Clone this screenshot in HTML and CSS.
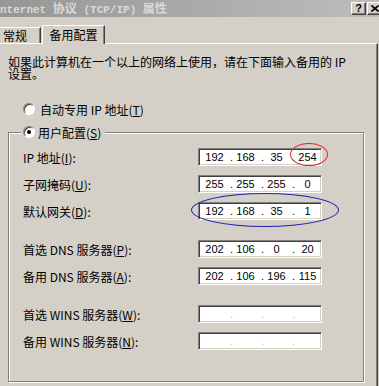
FILE: index.html
```html
<!DOCTYPE html>
<html lang="zh-CN">
<head>
<meta charset="utf-8">
<title>Internet 协议 (TCP/IP) 属性</title>
<link rel="stylesheet" href="styles.css">
</head>
<body>
<div class="titlebar">
  <span class="title">nternet <span class="cj">协议</span> (TCP/IP) <span class="cj">属性</span></span>
  <div class="tbtns">
    <span class="tbtn">?</span>
    <span class="tbtn"><svg width="8" height="7" viewBox="0 0 8 7"><path d="M0.5 0.5 L7.5 6.5 M7.5 0.5 L0.5 6.5" stroke="#000" stroke-width="1.6"/></svg></span>
  </div>
</div>
<div class="tabs">
  <div class="tab">常规</div>
  <div class="tab active">备用配置</div>
</div>
<div class="panel">
  <p class="desc"><span class="line">如果此计算机在一个以上的网络上使用，请在下面输入备用的 IP</span><span class="line">设置。</span></p>
  <div class="radio-row"><span class="radio"></span><span>自动专用 IP 地址(<u>T</u>)</span></div>
  <fieldset class="group">
    <legend><span class="radio checked"></span><span>用户配置(<u>S</u>)</span></legend>
    <div class="row"><span class="lbl">IP 地址(<u>I</u>):</span><div class="ip"><span class="oc">192</span><span class="dot">.</span><span class="oc">168</span><span class="dot">.</span><span class="oc">35</span><span class="dot">.</span><span class="oc">254</span></div></div>
    <div class="row"><span class="lbl">子网掩码(<u>U</u>):</span><div class="ip"><span class="oc">255</span><span class="dot">.</span><span class="oc">255</span><span class="dot">.</span><span class="oc">255</span><span class="dot">.</span><span class="oc">0</span></div></div>
    <div class="row"><span class="lbl">默认网关(<u>D</u>):</span><div class="ip"><span class="oc">192</span><span class="dot">.</span><span class="oc">168</span><span class="dot">.</span><span class="oc">35</span><span class="dot">.</span><span class="oc">1</span></div></div>
    <div class="row sep"><span class="lbl">首选 DNS 服务器(<u>P</u>):</span><div class="ip"><span class="oc">202</span><span class="dot">.</span><span class="oc">106</span><span class="dot">.</span><span class="oc">0</span><span class="dot">.</span><span class="oc">20</span></div></div>
    <div class="row"><span class="lbl">备用 DNS 服务器(<u>A</u>):</span><div class="ip"><span class="oc">202</span><span class="dot">.</span><span class="oc">106</span><span class="dot">.</span><span class="oc">196</span><span class="dot">.</span><span class="oc">115</span></div></div>
    <div class="row sep"><span class="lbl">首选 WINS 服务器(<u>W</u>):</span><div class="ip empty"><span class="oc"></span><span class="dot">.</span><span class="oc"></span><span class="dot">.</span><span class="oc"></span><span class="dot">.</span><span class="oc"></span></div></div>
    <div class="row"><span class="lbl">备用 WINS 服务器(<u>N</u>):</span><div class="ip empty"><span class="oc"></span><span class="dot">.</span><span class="oc"></span><span class="dot">.</span><span class="oc"></span><span class="dot">.</span><span class="oc"></span></div></div>
  </fieldset>
</div>
<div class="mark red"></div>
<div class="mark blue"></div>
</body>
</html>
```
FILE: styles.css
```css
* { box-sizing: border-box; }
html, body { margin: 0; }
body {
  width: 379px;
  height: 386px;
  overflow: hidden;
  position: relative;
  background: #d4d0c8;
  font-family: "Noto Sans CJK SC", "Liberation Sans", sans-serif;
  font-size: 12px;
  color: #000;
}
.titlebar {
  height: 17px;
  display: flex;
  align-items: center;
  justify-content: space-between;
  background: linear-gradient(to right, #969696, #bdbdbd);
}
.title {
  display: block;
  font-family: "Liberation Mono", "Noto Sans CJK SC", monospace;
  font-weight: bold;
  font-size: 11px;
  color: #dcd9d3;
  white-space: nowrap;
  height: 17px;
  line-height: 17px;
  padding-top: 1px;
}
.title .cj { font-size: 12px; line-height: 14px; font-family: "Noto Sans CJK SC", sans-serif; }
.tbtns { display: flex; gap: 1px; margin-right: -3px; }
.tbtn {
  width: 15px;
  height: 13px;
  background: #d4d0c8;
  border: 1px solid;
  border-color: #fff #404040 #404040 #fff;
  box-shadow: inset -1px -1px #808080;
  font: bold 11px "Liberation Sans", sans-serif;
  display: flex;
  align-items: center;
  justify-content: center;
  line-height: 1;
}
.tabs {
  height: 26px;
  display: flex;
  align-items: flex-end;
  position: relative;
  z-index: 1;
}
.tab {
  height: 16px;
  line-height: 15px;
  border: 1px solid;
  border-color: #fff #404040 transparent #fff;
  border-bottom: none;
  box-shadow: inset -1px 0 #808080;
}
.tab:first-child { width: 45px; margin-left: -4px; padding-left: 6px; }
.tab.active {
  width: 63px;
  height: 19px;
  margin-left: 1px;
  margin-bottom: -1px;
  text-align: center;
  line-height: 17px;
  background: #d4d0c8;
}
.panel {
  width: 378px;
  height: 343px;
  border-top: 1px solid #fff;
  border-right: 1px solid #404040;
  box-shadow: inset -1px 0 #808080;
  padding: 12px 0 0 8px;
}
.desc { margin: 0; display: flex; flex-direction: column; }
.desc .line { display: block; height: 12px; line-height: 12px; white-space: nowrap; }
.radio-row {
  display: flex;
  align-items: center;
  gap: 5px;
  height: 14px;
  margin: 22px 0 0 15px;
}
.radio {
  flex: none;
  width: 12px;
  height: 12px;
  border-radius: 50%;
  background: #fff;
  border: 1px solid;
  border-color: #808080 #fff #fff #808080;
  box-shadow: inset 1px 1px #404040;
  display: flex;
  align-items: center;
  justify-content: center;
}
.radio.checked::after {
  content: "";
  width: 4px;
  height: 4px;
  border-radius: 50%;
  background: #000;
}
.group {
  margin: 9px 0 0 0;
  width: 356px;
  min-width: 0;
  padding: 9px 0 31px 14px;
  border: 1px solid #808080;
  box-shadow: inset 1px 1px #fff, 1px 1px #fff;
}
.group legend {
  display: flex;
  align-items: center;
  gap: 3px;
  height: 14px;
  padding: 0 4px 0 2px;
  margin-left: -2px;
  background: #d4d0c8;
}
.row {
  display: flex;
  align-items: center;
  height: 18px;
  margin-top: 9px;
}
.row:first-of-type { margin-top: 0; }
.row.sep { margin-top: 20px; }
.lbl { width: 175px; white-space: nowrap; }
.ip {
  width: 124px;
  height: 18px;
  background: #fff;
  border: 1px solid;
  border-color: #808080 #fff #fff #808080;
  box-shadow: inset 1px 1px #404040, inset -1px -1px #d4d0c8;
  display: flex;
  align-items: center;
  padding-left: 3px;
  font: 11px "Liberation Sans", sans-serif;
  line-height: 16px;
}
.oc { width: 25px; text-align: center; }
.dot { width: 6px; text-align: right; }
.ip.empty .dot { color: #b8b8b8; }
.mark {
  position: absolute;
  border-radius: 50%;
  border: 1px solid;
}
.mark.red { left: 290px; top: 143px; width: 38px; height: 23px; border-color: #e02828; }
.mark.blue { left: 191px; top: 193px; width: 148px; height: 34px; border-color: #2020b4; }
```
